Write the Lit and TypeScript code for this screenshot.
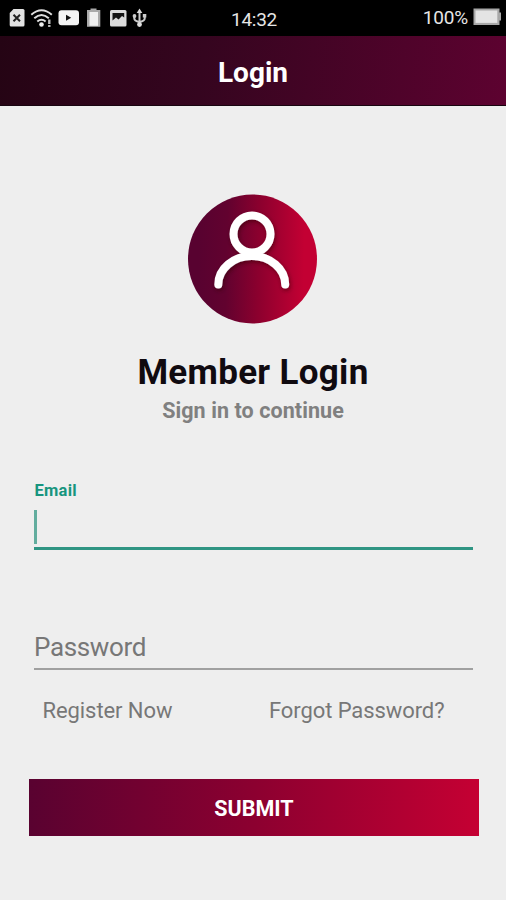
import { LitElement, html, css } from "lit";
import { customElement } from "lit/decorators.js";

@customElement("status-bar")
class StatusBar extends LitElement {
  static styles = css`
    :host {
      display: grid;
      grid-template-columns: 1fr auto 1fr;
      align-items: center;
      height: 36px;
      box-sizing: border-box;
      padding: 0 5px 0 8px;
      background: #000;
      color: #e6e6e6;
      font-size: 19px;
      line-height: 36px;
    }
    .icons { width: 144px; height: 36px; display: block; }
    .clock { padding: 3px 1px 0 0; line-height: 33px; letter-spacing: -0.3px; }
    .power { display: flex; justify-content: flex-end; align-items: center; gap: 5px; }
    .percent { line-height: 36px; letter-spacing: -0.2px; }
    .battery { width: 28px; height: 36px; display: block; }
  `;
  render() {
    return html`
      <svg class="icons" viewBox="8 0 144 36">
        <path d="M13.500 9H23q1.500 0 1.500 1.500V25q0 1.500-1.500 1.500H11.200q-1.500 0-1.500-1.500V13z" fill="#e2e2e2" />
        <path d="M13.500 14.800l6.500 6.400M20 14.800l-6.500 6.400" stroke="#222" stroke-width="2" />
        <g fill="none" stroke="#dedede" stroke-width="2">
          <path d="M31.300 14.800Q41.500 5.800 51.800 14.800" />
          <path d="M34.300 18.300Q41.500 11.800 48.800 18.300" />
          <path d="M37.300 21.500Q41.500 18 45.600 21.500" />
        </g>
        <circle cx="41.500" cy="24.500" r="2.300" fill="#eee" />
        <path d="M49.300 19.500v4.500M49.300 25v2" stroke="#bbb" stroke-width="2.400" />
        <rect x="58.500" y="10.300" width="20.500" height="15" rx="3" fill="#f4f4f4" />
        <path d="M66 14.800v6l5.200-3z" fill="#111" />
        <path d="M87 10h3.500V8.500h6V10h3.800v16.700H87z" fill="#aaa" />
        <path d="M89.500 12h8.500v13.800h-8.500z" fill="#f0f0f0" />
        <rect x="110" y="10" width="16.500" height="16.500" rx="1.500" fill="#dcdcdc" />
        <path d="M112.500 13h11.700v4.500l-2.200-1.500-3.500 3.500-2.500-2-3.500 3z" fill="#151515" />
        <g fill="none" stroke="#ccc" stroke-width="2">
          <path d="M139.500 12v13M134.300 15v3.500q0 2.500 5.200 3.500 5.200-1 5.200-3.500V15" />
        </g>
        <path d="M136.700 13l2.800-4.500 2.800 4.500z" fill="#ddd" />
        <circle cx="139.500" cy="24.500" r="2.400" fill="#ddd" />
        <circle cx="134.500" cy="16" r="1.900" fill="#ccc" />
        <path d="M142.800 14h3.500v3.500h-3.500z" fill="#ccc" />
      </svg>
      <div class="clock">14:32</div>
      <div class="power">
        <span class="percent">100%</span>
        <svg class="battery" viewBox="473 0 28 36">
          <path d="M473.500 8.500h26v4h1.500v8h-1.500v4.500h-26z" fill="#a8a8a8" />
          <path d="M475.500 10.500h21.800v12.400h-21.800z" fill="#e4e4e4" />
        </svg>
      </div>
    `;
  }
}

@customElement("app-root")
class AppRoot extends LitElement {
  static styles = css`
    :host {
      display: flex;
      flex-direction: column;
      width: 506px;
      height: 900px;
      overflow: hidden;
      background: #eee;
      font-family: Roboto, "Liberation Sans", sans-serif;
    }
    .header {
      height: 70px;
      box-sizing: border-box;
      border-bottom: 1px solid #180510;
      background: linear-gradient(97deg, #250414 0%, #35051f 40%, #5d0230 100%);
      color: #fff;
      font-size: 28px;
      font-weight: 700;
      line-height: 74px;
      text-align: center;
    }
    .body {
      display: flex;
      flex-direction: column;
      align-items: center;
      padding-top: 87px;
    }
    .avatar { width: 132px; height: 132px; display: block; }
    .title {
      margin-top: 27px;
      font-size: 35px;
      font-weight: 700;
      line-height: 42px;
      letter-spacing: 0.3px;
      color: #100a10;
    }
    .subtitle {
      margin-top: 4px;
      font-size: 21.500px;
      font-weight: 700;
      line-height: 26px;
      letter-spacing: 0.08px;
      color: #808080;
    }
    .fields { width: 439px; }
    .field { display: flex; flex-direction: column; box-sizing: border-box; }
    .email { height: 69px; margin-top: 57px; border-bottom: 3px solid #2f9583; }
    .label { padding-left: 1px; font-size: 16.500px; font-weight: 700; line-height: 20px; letter-spacing: 0.25px; color: #17957e; }
    .caret { width: 3px; height: 34px; margin-top: 9px; background: #62ad9e; }
    .password { height: 41px; margin-top: 79px; border-bottom: 2px solid #a0a0a0; }
    .placeholder { padding-left: 0.500px; font-size: 26px; line-height: 36px; letter-spacing: -0.35px; color: #777; }
    .links {
      display: flex;
      justify-content: space-between;
      padding: 0 28px 0 9px;
      margin-top: 27px;
      font-size: 22px;
      line-height: 28px;
      letter-spacing: -0.08px;
      color: #777;
    }
    .submit {
      width: 450px;
      height: 57px;
      margin: 54px 0 0 1px;
      padding: 2px 0 0 1px;
      border: 0;
      background: linear-gradient(92deg, #590230 0%, #8c0030 50%, #c50033 100%);
      color: #fff;
      font: 700 21.500px / 55px Roboto, sans-serif;
    }
  `;
  render() {
    return html`
      <status-bar></status-bar>
      <div class="header">Login</div>
      <div class="body">
        <svg class="avatar" viewBox="0 0 132 132">
          <defs>
            <linearGradient id="wine" x1="0" y1="0.490" x2="1" y2="0.510">
              <stop offset="0.080" stop-color="#580230" />
              <stop offset="0.300" stop-color="#62022f" />
              <stop offset="0.550" stop-color="#8c002e" />
              <stop offset="0.900" stop-color="#c30033" />
            </linearGradient>
            <filter id="soft" x="-20%" y="-20%" width="140%" height="140%">
              <feDropShadow dx="1" dy="2" stdDeviation="2" flood-color="#300" flood-opacity="0.550" />
            </filter>
          </defs>
          <circle cx="65.500" cy="66" r="64.500" fill="url(#wine)" />
          <g fill="none" stroke="#fff" stroke-width="8" stroke-linecap="round" filter="url(#soft)">
            <circle cx="65" cy="41" r="18.500" />
            <path d="M31.300 91.500A33.450 28.500 0 0 1 98.200 91.500" />
          </g>
        </svg>
        <div class="title">Member Login</div>
        <div class="subtitle">Sign in to continue</div>
        <div class="fields">
          <div class="field email">
            <span class="label">Email</span>
            <span class="caret"></span>
          </div>
          <div class="field password"><span class="placeholder">Password</span></div>
          <div class="links"><span>Register Now</span><span>Forgot Password?</span></div>
        </div>
        <button class="submit">SUBMIT</button>
      </div>
    `;
  }
}
